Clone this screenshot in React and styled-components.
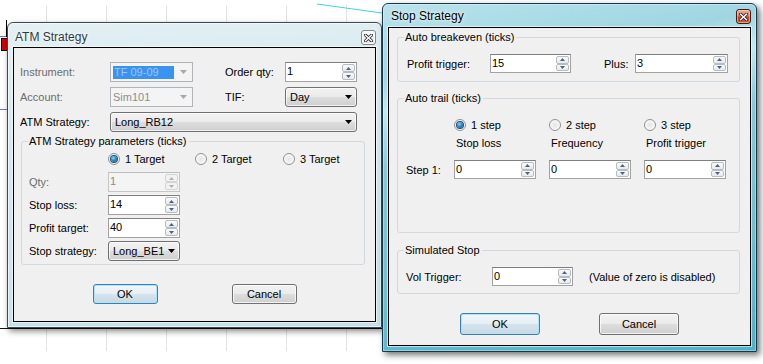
import React from "react";
import styled, { createGlobalStyle, css } from "styled-components";

const GlobalStyle = createGlobalStyle`
  html, body {
    margin: 0;
    padding: 0;
    background: #fff;
  }
  body {
    font-family: "Liberation Sans", Arial, sans-serif;
    font-size: 11px;
    overflow: hidden;
  }
`;

const Desktop = styled.div`
  position: relative;
  width: 763px;
  height: 364px;
  overflow: hidden;
  background: #fff;
`;

const Backdrop = styled.svg`
  position: absolute;
  left: 0;
  top: 0;
`;

const activeGlass = `linear-gradient(170deg, #b9e3ec 0%, #9fd6e2 18%, #c4e9f0 26%, #86c9d8 40%, #6fbfd1 70%, #4fb1c7 100%)`;
const inactiveGlass = `linear-gradient(175deg, #e3f0f4 0%, #d5e9ef 30%, #cfe5ec 60%, #c4dfe7 100%)`;

// windows on the desktop: their place is the content itself
const Window = styled.div`
  position: absolute;
  left: ${p => p.$x}px;
  top: ${p => p.$y}px;
  width: ${p => p.$w}px;
  height: ${p => p.$h}px;
  box-sizing: border-box;
  display: flex;
  flex-direction: column;
  padding: 0 5px 5px;
  border: 1px solid ${p => (p.$active ? "#16394a" : "#3c4a50")};
  border-radius: 6px 6px 0 0;
  background: ${p => (p.$active ? activeGlass : inactiveGlass)};
  box-shadow: ${p =>
    p.$active
      ? "3px 3px 6px rgba(0,0,0,0.55), inset 0 0 0 1px rgba(255,255,255,0.35)"
      : "2px 3px 6px rgba(0,0,0,0.5), inset 0 0 0 1px rgba(255,255,255,0.6)"};
`;

const TitleBar = styled.div`
  height: ${p => p.$h}px;
  flex: none;
  display: flex;
  align-items: flex-start;
  justify-content: space-between;
`;

const TitleText = styled.span`
  font-size: 12px;
  line-height: 14px;
  padding: ${p => p.$pad};
  color: ${p => (p.$active ? "#000" : "#2e3a40")};
  text-shadow: 0 0 5px rgba(255, 255, 255, 0.9), 0 0 2px rgba(255, 255, 255, 0.9);
`;

const CloseButton = styled.button`
  box-sizing: border-box;
  width: 15px;
  height: 15px;
  margin-top: ${p => p.$top}px;
  padding: 0;
  display: flex;
  align-items: center;
  justify-content: center;
  border-radius: 3px;
  ${p =>
    p.$active
      ? css`
          border: 1px solid #4a1a10;
          background: linear-gradient(#eab3a2 0%, #d9775d 45%, #c4452a 55%, #d2613e 100%);
          box-shadow: inset 0 0 0 1px rgba(255, 220, 200, 0.5);
        `
      : css`
          border: 1px solid #7d8a90;
          background: linear-gradient(#f4f8fa, #dfe8ec);
          box-shadow: inset 0 0 0 1px rgba(255, 255, 255, 0.8);
        `}
`;

const Client = styled.div`
  flex: 1;
  display: flex;
  flex-direction: column;
  background: #f0f0f0;
  border: 1px solid #000;
  box-shadow: 0 0 0 1px rgba(255, 255, 255, 0.6);
`;

/* ---------- form parts ---------- */

const Label = styled.span`
  font-size: 11px;
  line-height: 14px;
  white-space: nowrap;
  color: ${p => (p.$disabled ? "#6d6d6d" : "#000")};
  padding-left: ${p => p.$indent || 0}px;
`;

const SpinFrame = styled.div`
  box-sizing: border-box;
  width: ${p => p.$w}px;
  height: ${p => p.$h}px;
  display: flex;
  padding: 1px 1px 1px 0;
  border: 1px solid ${p => (p.$disabled ? "#c6c6c6" : "#a2a2a2")};
  border-top-color: ${p => (p.$disabled ? "#bdbdbd" : "#7f7f7f")};
  background: ${p => (p.$disabled ? "#f4f4f4" : "#fff")};
`;

const SpinValue = styled.span`
  flex: 1;
  padding: 1px 0 0 1px;
  font-size: 11px;
  line-height: 13px;
  color: ${p => (p.$disabled ? "#8a8a8a" : "#000")};
`;

const SpinButtons = styled.div`
  width: 13px;
  display: flex;
  flex-direction: column;
`;

const SpinHalf = styled.span`
  flex: 1;
  display: flex;
  align-items: center;
  justify-content: center;
  box-sizing: border-box;
  border: 1px solid ${p => (p.$disabled ? "#d4d4d4" : "#b6bcc2")};
  border-radius: 2px;
  background: ${p =>
    p.$disabled ? "#f2f2f2" : "linear-gradient(#fafafa, #e7e9eb)"};
`;

const Triangle = ({ w = 7, h = 4, color = "#000", up }) => (
  <svg width={w} height={h} viewBox={`0 0 ${w} ${h}`} style={{ display: "block" }}>
    <path
      d={up ? `M0 ${h}L${w / 2} 0L${w} ${h}Z` : `M0 0L${w} 0L${w / 2} ${h}Z`}
      fill={color}
    />
  </svg>
);

function SpinBox({ value, w, h = 20, disabled }) {
  const arrow = disabled ? "#b0b0b0" : "#4d6185";
  return (
    <SpinFrame $w={w} $h={h} $disabled={disabled}>
      <SpinValue $disabled={disabled}>{value}</SpinValue>
      <SpinButtons>
        <SpinHalf $disabled={disabled}>
          <Triangle w={5} h={3} color={arrow} up />
        </SpinHalf>
        <SpinHalf $disabled={disabled}>
          <Triangle w={5} h={3} color={arrow} />
        </SpinHalf>
      </SpinButtons>
    </SpinFrame>
  );
}

const ComboBox = styled.div`
  box-sizing: border-box;
  width: ${p => p.$w}px;
  height: 20px;
  display: flex;
  align-items: center;
  justify-content: space-between;
  padding: ${p => (p.$list ? "0 4px 0 4px" : "0 5px 0 2px")};
  font-size: 11px;
  ${p =>
    p.$list
      ? css`
          border: 1px solid #707070;
          border-radius: 3px;
          color: #000;
          background: linear-gradient(#f2f2f2 0%, #ebebeb 48%, #dddddd 52%, #cfcfcf 100%);
          box-shadow: inset 0 0 0 1px rgba(255, 255, 255, 0.7);
        `
      : css`
          border: 1px solid #afb4b8;
          color: #8d8d8d;
          background: #f4f4f4;
        `}
  ${p => p.$span && css`grid-column: ${p.$span};`}
`;

const Selected = styled.span`
  width: 60px;
  height: 13px;
  line-height: 13px;
  padding-left: 1px;
  background: #3a93f0;
  color: #9cc6f3;
`;

const RadioItem = styled.span`
  display: flex;
  align-items: center;
  gap: ${p => p.$gap}px;
  font-size: 11px;
  line-height: 14px;
  color: #000;
  white-space: nowrap;
`;

const RadioDot = styled.span`
  position: relative;
  box-sizing: border-box;
  width: 12px;
  height: 12px;
  border-radius: 50%;
  border: 1px solid #8f9193;
  background: radial-gradient(circle at 50% 50%, #e4e4e4 0%, #f6f6f6 60%, #ffffff 100%);
  ${p =>
    p.$checked &&
    css`
      &::after {
        content: "";
        position: absolute;
        left: 2px;
        top: 2px;
        width: 6px;
        height: 6px;
        border-radius: 50%;
        background: radial-gradient(circle at 40% 35%, #8fd6f8 0%, #2a8acb 45%, #0d4a78 100%);
        box-shadow: 0 0 0 1px #1d4f74;
      }
    `}
`;

const GroupBox = styled.fieldset`
  margin: ${p => p.$margin};
  padding: 0;
  min-width: 0;
  border: 1px solid #d2d9de;
  border-radius: 3px;
`;

const Legend = styled.legend`
  margin-left: 6px;
  padding: 0 2px 0 1px;
  font-size: 11px;
  line-height: 14px;
  color: #000;
`;

const GroupBody = styled.div`
  padding: ${p => p.$pad};
`;

const PushButton = styled.button`
  box-sizing: border-box;
  width: ${p => p.$w}px;
  height: ${p => p.$h}px;
  padding: 0;
  font-family: "Liberation Sans", Arial, sans-serif;
  font-size: 11px;
  color: #000;
  border-radius: 3px;
  border: 1px solid ${p => (p.$default ? "#3c7fb1" : "#707070")};
  background: ${p =>
    p.$default
      ? "linear-gradient(#f1f7fb 0%, #e6eff5 48%, #d5e3ec 52%, #c8d9e4 100%)"
      : "linear-gradient(#f2f2f2 0%, #ebebeb 48%, #dddddd 52%, #cfcfcf 100%)"};
  box-shadow: inset 0 0 0 1px ${p => (p.$default ? "#aee3f9" : "rgba(255,255,255,0.75)")};
`;

const ButtonRow = styled.div`
  display: flex;
  justify-content: center;
  gap: ${p => p.$gap}px;
  margin-top: ${p => p.$top}px;
`;

/* ---------- ATM strategy dialog ---------- */

const OrderGrid = styled.div`
  display: grid;
  grid-template-columns: 90px 83px 32px 60px 72px;
  grid-auto-rows: 20px;
  row-gap: 5px;
  align-items: center;
  padding: 14px 0 0 6px;
`;

const ParamRadios = styled.div`
  display: grid;
  grid-template-columns: 79px 87px 88px auto;
  height: 14px;
  align-items: center;
`;

const ParamGrid = styled.div`
  display: grid;
  grid-template-columns: 79px 72px;
  grid-auto-rows: 20px;
  row-gap: 3px;
  align-items: center;
  margin-top: 6px;
`;

/* ---------- stop strategy dialog ---------- */

const BreakevenRow = styled.div`
  display: grid;
  grid-template-columns: 83px 81px 33px 31px 93px;
  height: 19px;
  align-items: center;
`;

const TrailRow = styled.div`
  display: grid;
  grid-template-columns: 48px 95px 95px 82px;
  height: ${p => p.$h}px;
  margin-top: ${p => p.$top || 0}px;
  align-items: center;
`;

const VolRow = styled.div`
  display: flex;
  align-items: center;
  height: 19px;
`;

const VolLabel = styled(Label)`
  width: 86px;
`;

const Note = styled(Label)`
  margin-left: 16px;
`;

function CloseGlyph() {
  return (
    <svg width="9" height="8" viewBox="0 0 9 8" style={{ display: "block" }}>
      <path d="M1.5 1.2L7.5 6.8M7.5 1.2L1.5 6.8" stroke="#2b2b2b" strokeWidth="3" strokeLinecap="square" />
      <path d="M1.5 1.2L7.5 6.8M7.5 1.2L1.5 6.8" stroke="#fff" strokeWidth="1.4" strokeLinecap="square" />
    </svg>
  );
}

function ChartBackdrop() {
  const xs = Array.from({ length: 12 }, (_, i) => 46.5 + i * 60);
  return (
    <Backdrop width="763" height="364">
      {xs.map(x => (
        <line key={x} x1={x} y1={5} x2={x} y2={351} stroke="#e3e3e3" />
      ))}
      <line x1="317" y1="4" x2="382" y2="13" stroke="#3fd3e2" />
      <line x1="0" y1="36.5" x2="7" y2="36.5" stroke="#7070d8" />
      <line x1="0" y1="109.5" x2="7" y2="109.5" stroke="#7070d8" />
      <rect x="1.5" y="38.5" width="6" height="12" fill="#d40000" stroke="#000" />
      <line x1="6.5" y1="20" x2="6.5" y2="37" stroke="#000" />
      <line x1="0" y1="328.5" x2="382" y2="328.5" stroke="#111" />
    </Backdrop>
  );
}

export default function App() {
  return (
    <>
      <GlobalStyle />
      <Desktop>
        <ChartBackdrop />

        <Window $x={7} $y={22} $w={375} $h={306}>
          <TitleBar $h={24}>
            <TitleText $pad="7px 0 0 2px">ATM Strategy</TitleText>
            <CloseButton $top={7}>
              <CloseGlyph />
            </CloseButton>
          </TitleBar>
          <Client>
            <OrderGrid>
              <Label $disabled>Instrument:</Label>
              <ComboBox $w={83}>
                <Selected>TF 09-09</Selected>
                <Triangle w={7} h={4} color="#a8a8a8" />
              </ComboBox>
              <span />
              <Label>Order qty:</Label>
              <SpinBox value="1" w={72} h={20} />

              <Label $disabled>Account:</Label>
              <ComboBox $w={83}>
                <span>Sim101</span>
                <Triangle w={7} h={4} color="#a8a8a8" />
              </ComboBox>
              <span />
              <Label>TIF:</Label>
              <ComboBox $w={72} $list>
                <span>Day</span>
                <Triangle />
              </ComboBox>

              <Label>ATM Strategy:</Label>
              <ComboBox $w={247} $list $span="2 / 6">
                <span>Long_RB12</span>
                <Triangle />
              </ComboBox>
            </OrderGrid>

            <GroupBox $margin="2px 10px 0 7px">
              <Legend>ATM Strategy parameters (ticks)</Legend>
              <GroupBody $pad="4px 0 3px 7px">
                <ParamRadios>
                  <span />
                  <RadioItem $gap={5}>
                    <RadioDot $checked />1 Target
                  </RadioItem>
                  <RadioItem $gap={5}>
                    <RadioDot />2 Target
                  </RadioItem>
                  <RadioItem $gap={5}>
                    <RadioDot />3 Target
                  </RadioItem>
                </ParamRadios>
                <ParamGrid>
                  <Label $disabled>Qty:</Label>
                  <SpinBox value="1" w={72} disabled />
                  <Label>Stop loss:</Label>
                  <SpinBox value="14" w={72} />
                  <Label>Profit target:</Label>
                  <SpinBox value="40" w={72} />
                  <Label>Stop strategy:</Label>
                  <ComboBox $w={72} $list>
                    <span>Long_BE1</span>
                    <Triangle />
                  </ComboBox>
                </ParamGrid>
              </GroupBody>
            </GroupBox>

            <ButtonRow $gap={74} $top={19}>
              <PushButton $w={65} $h={20} $default>OK</PushButton>
              <PushButton $w={65} $h={20}>Cancel</PushButton>
            </ButtonRow>
          </Client>
        </Window>

        <Window $x={382} $y={3} $w={375} $h={349} $active>
          <TitleBar $h={23}>
            <TitleText $pad="5px 0 0 3px" $active>Stop Strategy</TitleText>
            <CloseButton $top={5} $active>
              <CloseGlyph />
            </CloseButton>
          </TitleBar>
          <Client>
            <GroupBox $margin="2px 10px 0 8px">
              <Legend>Auto breakeven (ticks)</Legend>
              <GroupBody $pad="10px 0 8px 9px">
                <BreakevenRow>
                  <Label>Profit trigger:</Label>
                  <SpinBox value="15" w={81} h={19} />
                  <span />
                  <Label>Plus:</Label>
                  <SpinBox value="3" w={93} h={19} />
                </BreakevenRow>
              </GroupBody>
            </GroupBox>

            <GroupBox $margin="9px 10px 0 8px">
              <Legend>Auto trail (ticks)</Legend>
              <GroupBody $pad="13px 0 53px 8px">
                <TrailRow $h={14}>
                  <span />
                  <RadioItem $gap={5}>
                    <RadioDot $checked />1 step
                  </RadioItem>
                  <RadioItem $gap={5}>
                    <RadioDot />2 step
                  </RadioItem>
                  <RadioItem $gap={5}>
                    <RadioDot />3 step
                  </RadioItem>
                </TrailRow>
                <TrailRow $h={14} $top={4}>
                  <span />
                  <Label $indent={2}>Stop loss</Label>
                  <Label $indent={2}>Frequency</Label>
                  <Label $indent={2}>Profit trigger</Label>
                </TrailRow>
                <TrailRow $h={19} $top={10}>
                  <Label>Step 1:</Label>
                  <SpinBox value="0" w={82} h={19} />
                  <SpinBox value="0" w={82} h={19} />
                  <SpinBox value="0" w={82} h={19} />
                </TrailRow>
              </GroupBody>
            </GroupBox>

            <GroupBox $margin="10px 10px 0 8px">
              <Legend>Simulated Stop</Legend>
              <GroupBody $pad="10px 0 7px 8px">
                <VolRow>
                  <VolLabel>Vol Trigger:</VolLabel>
                  <SpinBox value="0" w={81} h={19} />
                  <Note>(Value of zero is disabled)</Note>
                </VolRow>
              </GroupBody>
            </GroupBox>

            <ButtonRow $gap={59} $top={19}>
              <PushButton $w={80} $h={22} $default>OK</PushButton>
              <PushButton $w={80} $h={22}>Cancel</PushButton>
            </ButtonRow>
          </Client>
        </Window>
      </Desktop>
    </>
  );
}
